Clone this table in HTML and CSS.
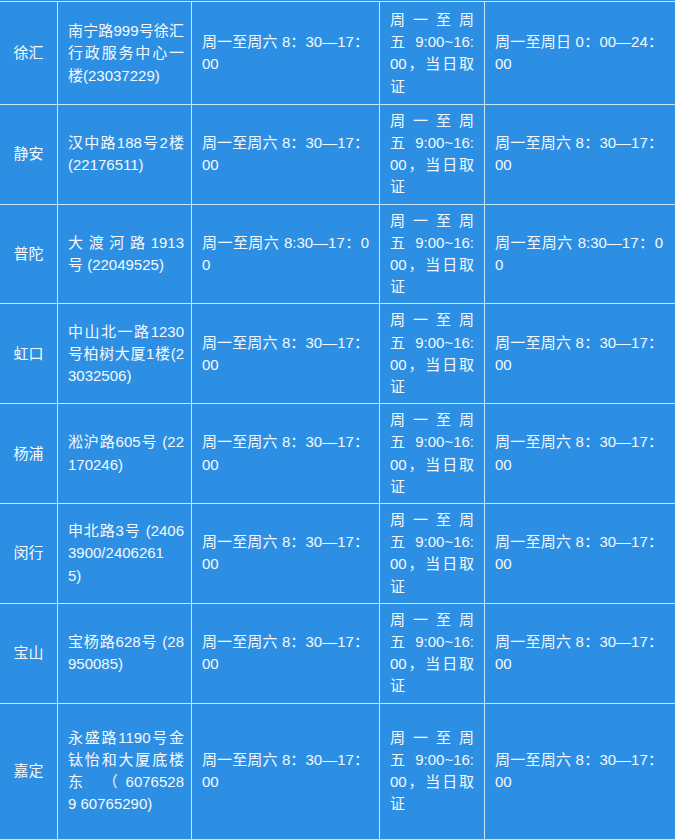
FILE: index.html
```html
<!DOCTYPE html>
<html lang="zh-CN">
<head>
<meta charset="utf-8">
<title>办证时间</title>
<link rel="stylesheet" href="styles.css">
</head>
<body>
<div class="table">
  <div class="row first">
    <div class="cell c1">徐汇</div>
    <div class="cell c2"><span class="ln">南宁路999号徐汇</span><span class="ln">行政服务中心一</span><span class="ln">楼(23037229)</span></div>
    <div class="cell c3">周一至周六 8：30—17：00</div>
    <div class="cell c4"><span class="ln">周一至周</span><span class="ln">五 9:00~16:</span><span class="ln">00，当日取</span><span class="ln">证</span></div>
    <div class="cell c5">周一至周日 0：00—24：00</div>
  </div>
  <div class="row">
    <div class="cell c1">静安</div>
    <div class="cell c2"><span class="ln">汉中路188号2楼</span><span class="ln">(22176511)</span></div>
    <div class="cell c3">周一至周六 8：30—17：00</div>
    <div class="cell c4"><span class="ln">周一至周</span><span class="ln">五 9:00~16:</span><span class="ln">00，当日取</span><span class="ln">证</span></div>
    <div class="cell c5">周一至周六 8：30—17：00</div>
  </div>
  <div class="row">
    <div class="cell c1">普陀</div>
    <div class="cell c2"><span class="ln">大渡河路1913</span><span class="ln">号 (22049525)</span></div>
    <div class="cell c3">周一至周六 8:30—17：00</div>
    <div class="cell c4"><span class="ln">周一至周</span><span class="ln">五 9:00~16:</span><span class="ln">00，当日取</span><span class="ln">证</span></div>
    <div class="cell c5">周一至周六 8:30—17：00</div>
  </div>
  <div class="row">
    <div class="cell c1">虹口</div>
    <div class="cell c2"><span class="ln">中山北一路1230</span><span class="ln">号柏树大厦1楼(2</span><span class="ln">3032506)</span></div>
    <div class="cell c3">周一至周六 8：30—17：00</div>
    <div class="cell c4"><span class="ln">周一至周</span><span class="ln">五 9:00~16:</span><span class="ln">00，当日取</span><span class="ln">证</span></div>
    <div class="cell c5">周一至周六 8：30—17：00</div>
  </div>
  <div class="row">
    <div class="cell c1">杨浦</div>
    <div class="cell c2"><span class="ln">淞沪路605号 (22</span><span class="ln">170246)</span></div>
    <div class="cell c3">周一至周六 8：30—17：00</div>
    <div class="cell c4"><span class="ln">周一至周</span><span class="ln">五 9:00~16:</span><span class="ln">00，当日取</span><span class="ln">证</span></div>
    <div class="cell c5">周一至周六 8：30—17：00</div>
  </div>
  <div class="row">
    <div class="cell c1">闵行</div>
    <div class="cell c2"><span class="ln">申北路3号 (2406</span><span class="ln">3900/2406261</span><span class="ln">5)</span></div>
    <div class="cell c3">周一至周六 8：30—17：00</div>
    <div class="cell c4"><span class="ln">周一至周</span><span class="ln">五 9:00~16:</span><span class="ln">00，当日取</span><span class="ln">证</span></div>
    <div class="cell c5">周一至周六 8：30—17：00</div>
  </div>
  <div class="row">
    <div class="cell c1">宝山</div>
    <div class="cell c2"><span class="ln">宝杨路628号 (28</span><span class="ln">950085)</span></div>
    <div class="cell c3">周一至周六 8：30—17：00</div>
    <div class="cell c4"><span class="ln">周一至周</span><span class="ln">五 9:00~16:</span><span class="ln">00，当日取</span><span class="ln">证</span></div>
    <div class="cell c5">周一至周六 8：30—17：00</div>
  </div>
  <div class="row last">
    <div class="cell c1">嘉定</div>
    <div class="cell c2"><span class="ln">永盛路1190号金</span><span class="ln">钛怡和大厦底楼</span><span class="ln">东 （6076528</span><span class="ln">9 60765290)</span></div>
    <div class="cell c3">周一至周六 8：30—17：00</div>
    <div class="cell c4"><span class="ln">周一至周</span><span class="ln">五 9:00~16:</span><span class="ln">00，当日取</span><span class="ln">证</span></div>
    <div class="cell c5">周一至周六 8：30—17：00</div>
  </div>
</div>
</body>
</html>
```
FILE: styles.css
```css
html, body {
  margin: 0;
  padding: 0;
  background: #2d8fe3;
  overflow: hidden;
}

body {
  font-family: "Liberation Sans", "Noto Sans CJK SC", sans-serif;
  font-size: 15px;
  line-height: 22.2px;
  color: #f4f9fe;
}

.table {
  display: flex;
  flex-direction: column;
  gap: 1px;
  width: 677px;
  margin: 1px 0 0 -1px;
  padding: 1px 0 1px 1px;
  background: #c6e8fa;
}

.row {
  display: grid;
  grid-template-columns: 57px 133px 187px 104px 192px;
  gap: 1px;
}

.cell {
  background: #2d8fe3;
  padding: 5px 10px;
  display: flex;
  flex-direction: column;
  justify-content: center;
  word-break: break-all;
  text-align: justify;
}

.row.first .cell {
  padding-top: 7px;
  padding-bottom: 6px;
}

.row.last .cell {
  padding-top: 23px;
  padding-bottom: 23px;
}

.cell.c1 {
  align-items: center;
  padding-left: 0;
  padding-right: 0;
  text-align: center;
}

.cell.c2 {
  padding-right: 7px;
}

.cell.c5 {
  padding-right: 14px;
}

.ln {
  display: block;
}

.ln:not(:last-child) {
  text-align-last: justify;
}
```
